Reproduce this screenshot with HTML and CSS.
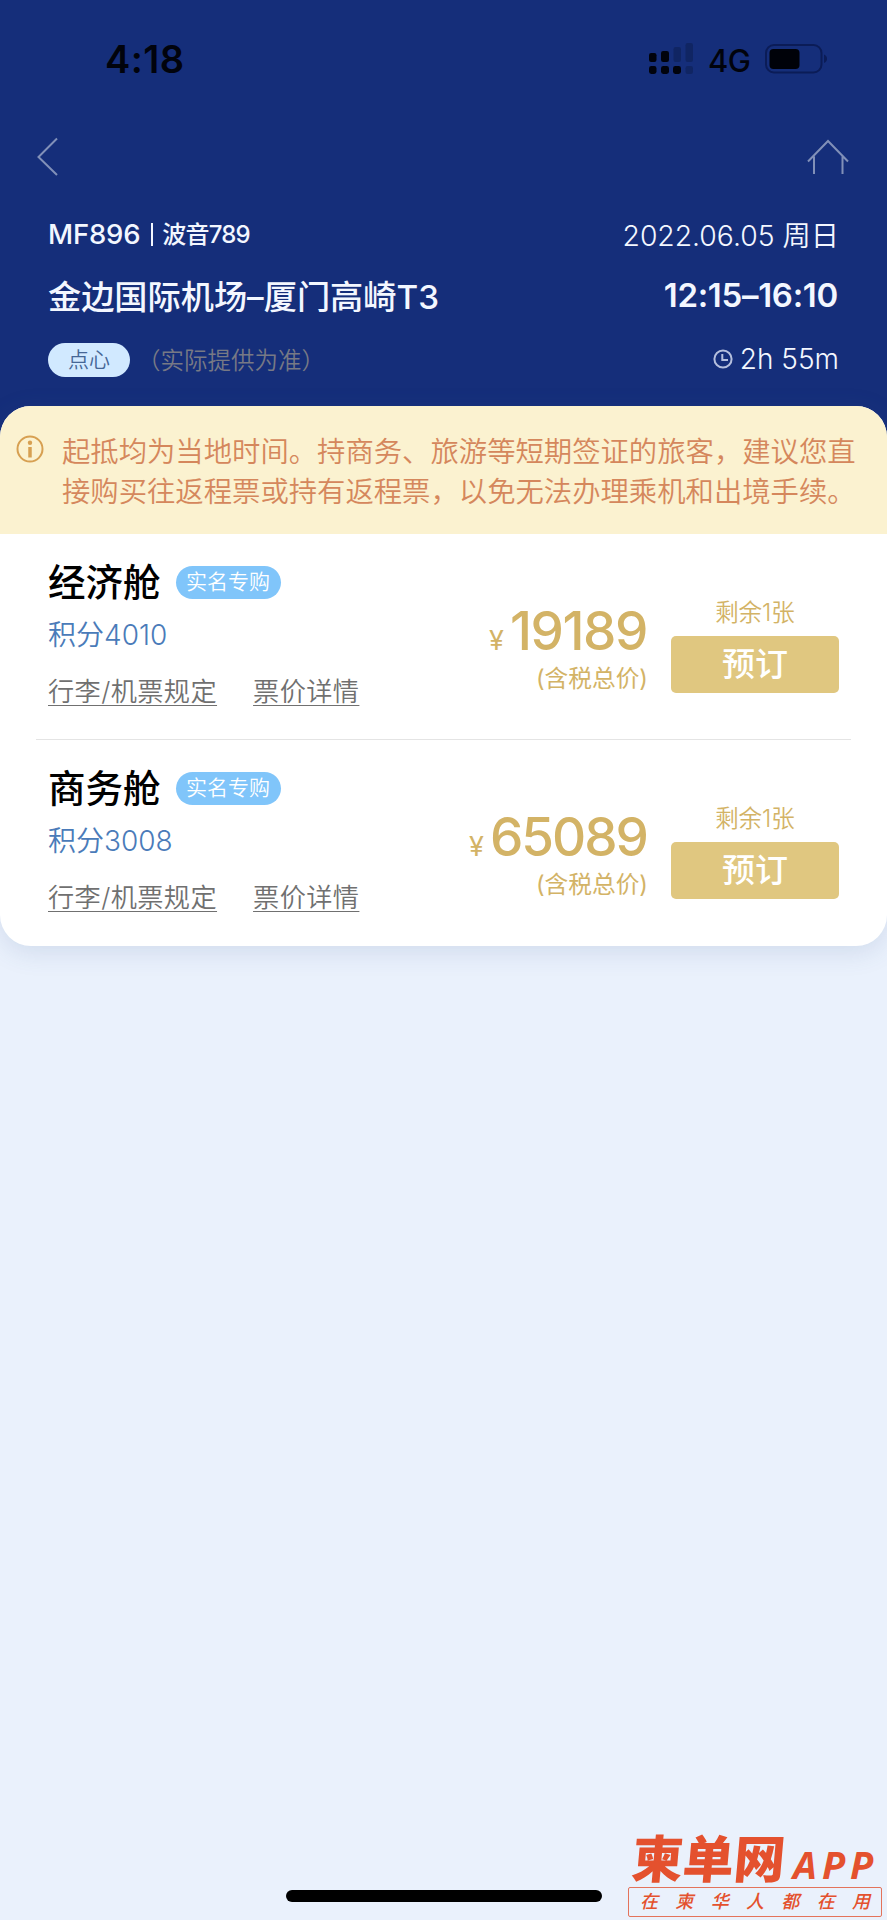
FILE: index.html
```html
<!DOCTYPE html>
<html lang="zh-CN">
<head>
<meta charset="utf-8">
<meta name="viewport" content="width=device-width, initial-scale=1">
<title>航班舱位</title>
<link rel="stylesheet" href="styles.css">
</head>
<body>
<div class="screen">
  <header class="header">
    <div class="status">
      <span class="status-time">4:18</span>
      <div class="status-right">
        <svg class="signal" width="44" height="32" viewBox="0 0 44 32">
          <g fill="#01030c"><rect x="0" y="10" width="7.5" height="9" rx="2.2"/><rect x="12" y="8" width="8" height="11" rx="2.2"/><rect x="0" y="23" width="7.5" height="8" rx="2.4"/><rect x="12" y="23" width="8" height="8" rx="2.4"/><rect x="24" y="23" width="8" height="8" rx="2.4"/></g>
          <g fill="#102563"><rect x="24.500" y="4" width="7.500" height="15" rx="2.200"/><rect x="36.500" y="0" width="7.500" height="19" rx="2.200"/><rect x="36.500" y="23" width="7.500" height="8" rx="2.200"/></g>
        </svg>
        <span class="network">4G</span>
        <svg class="battery" width="64" height="30" viewBox="0 0 64 30">
          <rect x="1" y="1" width="55.500" height="27.500" rx="8" fill="none" stroke="#0b1c57" stroke-width="2"/>
          <rect x="4.500" y="5" width="30" height="20" rx="4" fill="#000209"/>
          <path d="M59 10.500q3 1.200 3 4.200t-3 4.200z" fill="#0b1c57"/>
        </svg>
      </div>
    </div>
    <nav class="nav">
      <svg width="22" height="40" viewBox="0 0 22 40"><path d="M20 1.500 1.500 20 20 38" fill="none" stroke="#8190b8" stroke-width="2"/></svg>
      <svg width="42" height="36" viewBox="0 0 42 36"><path d="M1 22.500 21 2 41 22.500M7 17.500V35M35.500 17.500V35" fill="none" stroke="#8190b8" stroke-width="2"/></svg>
    </nav>
    <div class="flight">
      <div class="flight-row row-number">
        <div class="number"><span class="code">MF896</span><i class="bar"></i><span class="plane">波音789</span></div>
        <span class="date">2022.06.05 周日</span>
      </div>
      <div class="flight-row row-route">
        <span class="route">金边国际机场–厦门高崎T3</span>
        <span class="times">12:15–16:10</span>
      </div>
      <div class="flight-row row-meal">
        <div class="meal"><span class="meal-pill">点心</span><span class="meal-note">（实际提供为准）</span></div>
        <div class="duration">
          <svg width="20" height="20" viewBox="0 0 20 20" fill="none" stroke="#b5bfdd" stroke-width="2"><circle cx="10" cy="10" r="8.600"/><path d="M9.300 5V11H15"/></svg>
          <span>2h 55m</span>
        </div>
      </div>
    </div>
  </header>
  <main class="card">
    <div class="notice">
      <svg class="info" width="28" height="28" viewBox="0 0 28 28"><circle cx="14" cy="14" r="12.500" fill="none" stroke="#d7a052" stroke-width="2"/><circle cx="14" cy="7.700" r="2.200" fill="#d7a052"/><path d="M14 12v10.500" stroke="#d7a052" stroke-width="3.500"/></svg>
      <p class="notice-text">起抵均为当地时间。持商务、旅游等短期签证的旅客，建议您直<br>接购买往返程票或持有返程票，以免无法办理乘机和出境手续。</p>
    </div>
    <section class="cabin">
      <div class="cabin-info">
        <div class="cabin-title"><h2>经济舱</h2><span class="badge">实名专购</span></div>
        <div class="points">积分<span class="num">4010</span></div>
        <div class="links"><a>行李/机票规定</a><a>票价详情</a></div>
      </div>
      <div class="price">
        <div class="amount"><span class="yen">¥</span><span class="value value-ones">19189</span></div>
        <div class="tax">(含税总价)</div>
      </div>
      <div class="book"><span class="left">剩余1张</span><button class="btn">预订</button></div>
    </section>
    <section class="cabin">
      <div class="cabin-info">
        <div class="cabin-title"><h2>商务舱</h2><span class="badge">实名专购</span></div>
        <div class="points">积分<span class="num">3008</span></div>
        <div class="links"><a>行李/机票规定</a><a>票价详情</a></div>
      </div>
      <div class="price">
        <div class="amount"><span class="yen">¥</span><span class="value">65089</span></div>
        <div class="tax">(含税总价)</div>
      </div>
      <div class="book"><span class="left">剩余1张</span><button class="btn">预订</button></div>
    </section>
  </main>
  <div class="home-indicator"></div>
  <div class="watermark">
    <div class="brand"><span class="brand-name">柬单网</span><span class="brand-app">APP</span></div>
    <div class="slogan"><span>在</span><span>柬</span><span>华</span><span>人</span><span>都</span><span>在</span><span>用</span></div>
  </div>
</div>
</body>
</html>
```
FILE: styles.css
```css
* { box-sizing: border-box; }
body { margin: 0; font-family: Inter, "Noto Sans CJK SC", sans-serif; }
h2, p { margin: 0; }
svg { display: block; flex: none; }
.screen { position: relative; width: 887px; height: 1920px; overflow: hidden; background: #eaf1fc; white-space: nowrap; }
.header { height: 440px; background: #152e7a; color: #f3f7ff; }
.status { height: 118px; padding: 0 58px 0 105px; display: flex; justify-content: space-between; }
.status-time { margin-top: 37px; font-size: 38px; line-height: 45px; font-weight: 600; letter-spacing: .4px; color: #01030c; }
.status-right { display: flex; align-items: flex-start; margin-top: 43px; }
.network { width: 42px; margin: -2px 15px 0; font-size: 31px; line-height: 40px; font-weight: 500; letter-spacing: -.5px; color: #01030c; }
.battery { margin-top: 1px; }
.nav { height: 80px; padding: 19px 38px 0 37px; display: flex; justify-content: space-between; }
.nav svg:last-child { margin-top: 2px; }
.flight { padding: 16px 48px 0; }
.flight-row { display: flex; justify-content: space-between; align-items: center; }
.row-number { height: 40px; }
.row-route { height: 84px; }
.row-meal { height: 44px; }
.number, .meal, .duration { display: flex; align-items: center; }
.code { font-size: 27.5px; font-weight: 500; letter-spacing: -.2px; }
.bar { width: 2px; height: 23px; margin: 0 9px 0 11px; background: #f3f7ff; }
.plane { margin-top: -3px; font-size: 24px; font-weight: 500; letter-spacing: -.8px; }
.date { margin-top: -2px; font-size: 28.3px; font-weight: 350; }
.route { margin-top: -4px; font-size: 33.2px; font-weight: 500; }
.times { margin-right: 1px; margin-top: -2px; font-size: 33px; font-weight: 600; letter-spacing: -.3px; }
.meal-pill { width: 82px; height: 34px; border-radius: 17px; background: #d1e9ff; color: #456696; font-size: 21px; line-height: 33px; font-weight: 350; text-align: center; }
.meal-note { margin: -2px 0 0 7px; font-size: 23.5px; font-weight: 350; color: #777985; }
.duration { gap: 7px; margin-top: -2px; font-size: 28px; font-weight: 350; }
.card { height: 540px; margin-top: -34px; border-radius: 31px; background: #fff; overflow: hidden; box-shadow: 0 6px 26px rgba(60, 95, 150, .15); }
.notice { height: 128px; padding: 25px 0 0 16px; display: flex; background: #fbf2d0; }
.info { margin-top: 4px; }
.notice-text { margin: 2px 0 0 18px; font-size: 28.35px; line-height: 39.5px; font-weight: 350; color: #d5875c; }
.cabin { height: 206px; margin: 0 36px; padding: 0 12px; display: flex; }
.cabin:not(:last-child) { border-bottom: 1px solid #e4e4e4; }
.cabin-info { width: 330px; padding-top: 22px; }
.cabin-title { height: 53px; display: flex; align-items: center; gap: 15px; }
.cabin-title h2 { font-size: 37.5px; line-height: 54px; font-weight: 500; color: #000; }
.badge { width: 105px; height: 33px; border-radius: 17px; background: #80c5fa; color: #fff; font-size: 21px; line-height: 32px; font-weight: 350; text-align: center; }
.points { height: 52px; font-size: 28px; line-height: 52px; font-weight: 350; color: #4a7bb9; }
.links { display: flex; gap: 36px; padding-top: 13px; }
.links a { height: 38px; font-size: 26.2px; line-height: 36px; font-weight: 350; letter-spacing: .4px; color: #707070; text-decoration: underline; text-decoration-thickness: 1px; text-underline-offset: 4px; }
.price { width: 270px; padding-top: 64px; text-align: right; color: #d3b366; }
.amount { height: 66px; line-height: 66px; }
.yen { margin-right: 6px; font-size: 27px; }
.value { margin-right: 1px; font-size: 53px; font-weight: 500; letter-spacing: -2px; }
.value-ones { letter-spacing: -1.4px; }
.tax { height: 30px; font-size: 23.7px; line-height: 30px; }
.book { width: 168px; margin-left: 23px; padding-top: 62px; display: flex; flex-direction: column; align-items: center; }
.left { height: 40px; font-size: 23.5px; line-height: 34px; font-weight: 350; color: #d3b366; }
.btn { width: 168px; height: 57px; padding: 0; border: 0; border-radius: 5px; background: #e0c780; color: #fff; font: 500 33px/57px Inter, "Noto Sans CJK SC", sans-serif; }
.home-indicator { position: absolute; left: 286px; top: 1890px; width: 316px; height: 12px; border-radius: 6px; background: #000; }
.watermark { position: absolute; left: 628px; top: 1830px; width: 254px; color: #e4512e; }
.brand { height: 57px; display: flex; align-items: flex-end; }
.brand-name { margin: 0 0 -1px 4px; font-size: 51px; line-height: 57px; font-weight: 900; transform: skewX(-5deg); }
.brand-app { margin-left: 8px; font: italic 700 38px/46px "Noto Sans", sans-serif; letter-spacing: 5px; }
.slogan { height: 30px; padding: 0 11px; border: 1px solid #e4735b; border-radius: 2px; display: flex; justify-content: space-between; font-size: 18px; line-height: 28px; font-weight: 500; font-style: italic; }
```
